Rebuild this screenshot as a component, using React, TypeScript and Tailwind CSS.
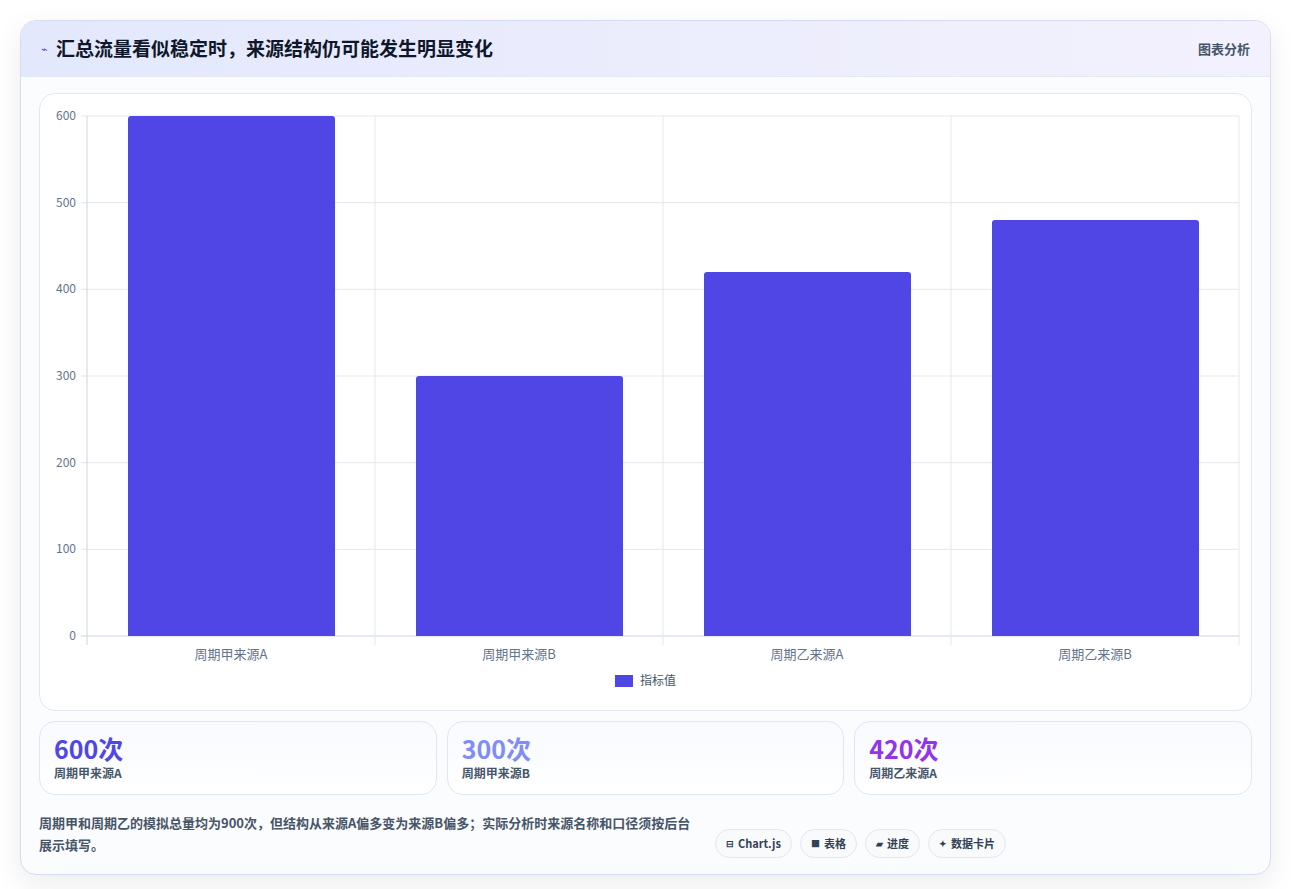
const data = [
  { label: '周期甲来源A', value: 600 },
  { label: '周期甲来源B', value: 300 },
  { label: '周期乙来源A', value: 420 },
  { label: '周期乙来源B', value: 480 },
];

const font = '"Noto Sans CJK SC", "Noto Sans", sans-serif';

function Chart() {
  const left = 47;
  const right = 1199;
  const top = 22;
  const bottom = 542;
  const colW = (right - left) / data.length;
  const y = (v: number) => bottom - ((bottom - top) * v) / 600;
  return (
    <svg width="1210" height="615" className="block" style={{ fontFamily: font }}>
      {[0, 100, 200, 300, 400, 500, 600].map((v) => (
        <g key={v}>
          <line x1={left - 6} x2={right} y1={y(v)} y2={y(v)} stroke={v === 0 ? '#cbd5e1' : '#e5e7eb'} />
          <text x={left - 11} y={y(v) + 4} textAnchor="end" fontSize="12" fill="#64748b">{v}</text>
        </g>
      ))}
      {[0, 1, 2, 3, 4].map((i) => (
        <line key={i} x1={left + i * colW} x2={left + i * colW} y1={top} y2={bottom + 9} stroke={i === 0 ? '#cbd5e1' : '#e5e7eb'} />
      ))}
      {data.map((d, i) => {
        const x = left + i * colW + 41;
        return (
          <g key={d.label}>
            <path
              d={`M${x} ${bottom} V${y(d.value) + 3} q0 -3 3 -3 H${x + 204} q3 0 3 3 V${bottom} Z`}
              fill="#4f46e5"
            />
            <text x={left + i * colW + colW / 2} y={565} textAnchor="middle" fontSize="13" fill="#64748b">{d.label}</text>
          </g>
        );
      })}
      <rect x={575} y={581} width={18} height={12} fill="#4f46e5" />
      <text x={600} y={591} fontSize="12" fill="#475569">指标值</text>
    </svg>
  );
}

const stats = [
  { v: '600次', label: '周期甲来源A', color: 'text-[#4f46e5]' },
  { v: '300次', label: '周期甲来源B', color: 'text-[#818cf8]' },
  { v: '420次', label: '周期乙来源A', color: 'text-[#9333ea]' },
];

const chips = [
  { icon: '⊟', text: 'Chart.js' },
  { icon: '■', text: '表格' },
  { icon: '▰', text: '进度' },
  { icon: '✦', text: '数据卡片' },
];

export default function App() {
  return (
    <div className="min-h-screen bg-white px-5 pt-5" style={{ fontFamily: font }}>
      <div className="w-[1251px] overflow-hidden rounded-2xl border border-[#d6dcf3] bg-[#fbfcfe] shadow-[0_10px_30px_rgba(15,23,42,0.08)]">
        <div className="flex h-[56px] items-center justify-between border-b border-[#e4e8f7] bg-gradient-to-r from-[#e3e8fc] to-[#f3f1fd] px-5">
          <div className="flex items-center gap-2">
            <span className="text-[11px] text-[#4f46e5]">⌁</span>
            <span className="text-[19px] font-bold text-[#0f172a]">汇总流量看似稳定时，来源结构仍可能发生明显变化</span>
          </div>
          <span className="text-[13px] font-semibold text-[#475569]">图表分析</span>
        </div>
        <div className="px-[18px] pt-4">
          <div className="h-[618px] rounded-2xl border border-[#e2e8f0] bg-white">
            <Chart />
          </div>
          <div className="mt-[10px] grid grid-cols-3 gap-[10px]">
            {stats.map((s) => (
              <div key={s.v} className="h-[74px] rounded-2xl border border-[#dfe7f5] bg-gradient-to-b from-[#f8faff] to-white px-[14px] pt-[10px]">
                <div className={`text-[25px] font-bold leading-[32px] ${s.color}`}>{s.v}</div>
                <div className="text-[12px] font-semibold text-[#475569]">{s.label}</div>
              </div>
            ))}
          </div>
          <div className="flex items-center gap-5 pb-4 pt-[14px]">
            <p className="w-[656px] text-[13px] font-semibold leading-[22px] text-[#475569]">
              周期甲和周期乙的模拟总量均为900次，但结构从来源A偏多变为来源B偏多；实际分析时来源名称和口径须按后台展示填写。
            </p>
            <div className="mt-5 flex gap-2">
              {chips.map((c) => (
                <span key={c.text} className="flex h-[29px] items-center gap-1 rounded-full border border-[#e2e8f0] bg-[#f8fafc] px-[10px] text-[11px] font-semibold text-[#334155]">
                  <span className="text-[9px]">{c.icon}</span>
                  {c.text}
                </span>
              ))}
            </div>
          </div>
        </div>
      </div>
    </div>
  );
}
